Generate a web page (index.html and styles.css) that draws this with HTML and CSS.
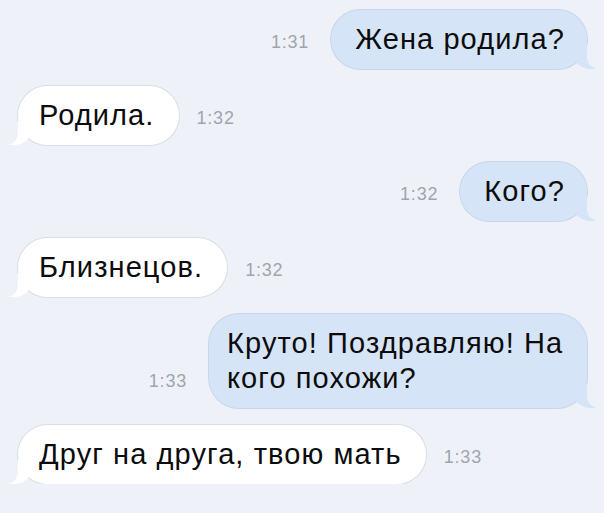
FILE: index.html
```html
<!DOCTYPE html>
<html lang="ru">
<head>
    <meta charset="UTF-8">
    <meta name="viewport" content="width=device-width, initial-scale=1.0">
    <title>Чат</title>
    <link rel="stylesheet" href="styles.css">
</head>
<body>
    <div class="chat">
        <div class="row out">
            <span class="time">1:31</span>
            <div class="bubble">Жена родила?</div>
        </div>

        <div class="row in">
            <div class="bubble">Родила.</div>
            <span class="time">1:32</span>
        </div>

        <div class="row out">
            <span class="time">1:32</span>
            <div class="bubble">Кого?</div>
        </div>

        <div class="row in">
            <div class="bubble">Близнецов.</div>
            <span class="time">1:32</span>
        </div>

        <div class="row out">
            <span class="time">1:33</span>
            <div class="bubble wide">Круто! Поздравляю! На кого похожи?</div>
        </div>

        <div class="row in">
            <div class="bubble">Друг на друга, твою мать</div>
            <span class="time">1:33</span>
        </div>
    </div>
</body>
</html>
```

FILE: styles.css
```css
body {
    margin: 0;
    background: #eef2f8;
    font-family: "Liberation Sans", Arial, sans-serif;
    color: #0c0c0c;
}

.chat {
    display: flex;
    flex-direction: column;
    gap: 17px;
    padding: 10px 17px 0 18px;
}

.row {
    display: flex;
    align-items: flex-end;
}

.row.out {
    justify-content: flex-end;
    gap: 22px;
}

.row.in {
    gap: 18px;
}

.time {
    font-size: 18px;
    line-height: 20px;
    letter-spacing: 0.8px;
    color: #9ea5ae;
    margin-bottom: 17px;
}

.bubble {
    position: relative;
    font-size: 29px;
    line-height: 35px;
    letter-spacing: 1.1px;
    padding: 12px 22px 12px 24px;
    border-radius: 30px;
}

.bubble.wide {
    max-width: 338px;
    padding-left: 18px;
}

.out .bubble {
    background: #d6e4f7;
    box-shadow: 0 0 0 1px #c8d6ea;
}

.in .bubble {
    background: #fff;
    box-shadow: 0 0 0 1px #dadee5;
    padding-left: 21px;
    padding-right: 24px;
}

/* хвостики пузырей */
.bubble::before,
.bubble::after {
    content: "";
    position: absolute;
    bottom: 0;
    height: 24px;
}

.out .bubble::before {
    right: -10px;
    width: 24px;
    background: #d6e4f7;
    border-bottom-left-radius: 18px 16px;
}

.out .bubble::after {
    right: -26px;
    width: 26px;
    background: #eef2f8;
    border-bottom-left-radius: 12px;
}

.in .bubble::before {
    left: -10px;
    width: 24px;
    background: #fff;
    border-bottom-right-radius: 18px 16px;
}

.in .bubble::after {
    left: -26px;
    width: 26px;
    background: #eef2f8;
    border-bottom-right-radius: 12px;
}
```
